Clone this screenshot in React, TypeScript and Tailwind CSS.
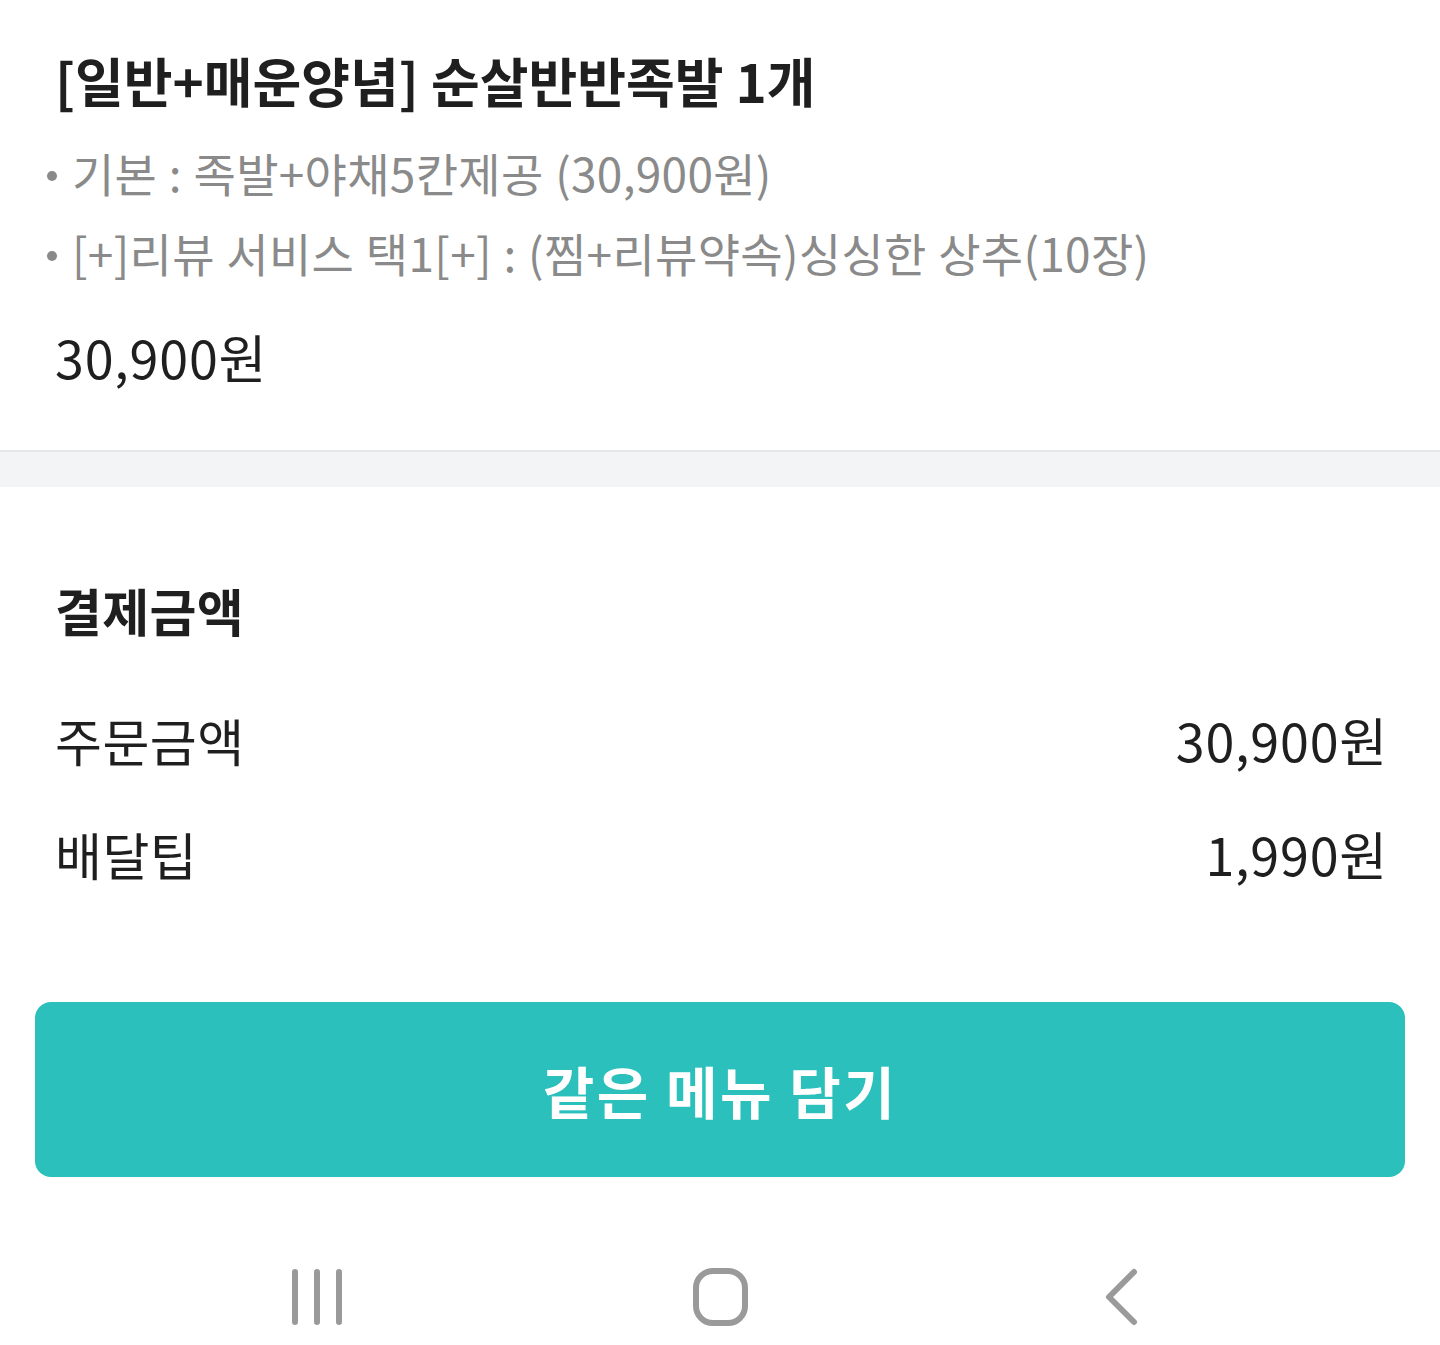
import React from "react";

const font = { fontFamily: '"Noto Sans CJK KR", "Noto Sans", sans-serif' };

function NavBar() {
  return (
    <div className="flex items-center justify-around px-[115px] pt-[90px] pb-[20px]">
      <svg width="60" height="60" viewBox="0 0 60 60" className="text-[#9a9a9a]">
        <g stroke="currentColor" strokeWidth="6" strokeLinecap="round">
          <line x1="8" y1="5" x2="8" y2="55" />
          <line x1="30" y1="5" x2="30" y2="55" />
          <line x1="52" y1="5" x2="52" y2="55" />
        </g>
      </svg>
      <svg width="60" height="60" viewBox="0 0 60 60" className="text-[#9a9a9a]">
        <rect x="6" y="4" width="49" height="52" rx="17" fill="none" stroke="currentColor" strokeWidth="6" />
      </svg>
      <svg width="60" height="60" viewBox="0 0 60 60" className="text-[#9a9a9a]">
        <polyline points="41,5 16,30 41,55" fill="none" stroke="currentColor" strokeWidth="6" strokeLinecap="round" strokeLinejoin="round" />
      </svg>
    </div>
  );
}

export default function App() {
  const options = [
    "기본 : 족발+야채5칸제공 (30,900원)",
    "[+]리뷰 서비스 택1[+] : (찜+리뷰약속)싱싱한 상추(10장)",
  ];
  const rows = [
    { label: "주문금액", value: "30,900원" },
    { label: "배달팁", value: "1,990원" },
  ];

  return (
    <div className="min-h-[1345px] w-[1440px] bg-white text-[#1f1f1f]" style={font}>
      {/* menu item */}
      <section className="px-[55px] pt-[40px] pb-[58px]">
        <h1 className="text-[53px] font-bold leading-[80px] tracking-[0px]">
          [일반+매운양념] 순살반반족발 1개
        </h1>
        <ul className="mt-[12px] -ml-[8px]">
          {options.map((o) => (
            <li
              key={o}
              className="flex items-center text-[46px] leading-[80px] tracking-[0.3px] [word-spacing:1px] text-[#8a8a8a]"
            >
              <span className="mr-[15px] mt-[8px] h-[10px] w-[10px] shrink-0 rounded-full bg-[#8a8a8a]" />
              {o}
            </li>
          ))}
        </ul>
        <div className="mt-[30px] text-[52px] leading-[70px] tracking-[0.8px]">30,900원</div>
      </section>

      <div className="h-[37px] border-t-2 border-[#e6e7ea] bg-[#f3f4f6]" />

      {/* payment */}
      <section className="px-[55px] pt-[88px] pb-[91px]">
        <h2 className="text-[51px] font-bold leading-[70px] tracking-[0.3px]">결제금액</h2>
        <div className="mt-[38px] flex flex-col">
          {rows.map((r) => (
            <div key={r.label} className="flex h-[114px] items-center justify-between">
              <span className="text-[51px] tracking-[0.5px]">{r.label}</span>
              <span className="-mr-[3px] text-[52px] tracking-[0.8px]">{r.value}</span>
            </div>
          ))}
        </div>
      </section>

      <div className="px-[35px]">
        <button className="flex h-[175px] w-full items-center justify-center rounded-[16px] bg-[#2bc0bc] text-[56px] font-bold tracking-[2.5px] text-white">
          같은 메뉴 담기
        </button>
      </div>

      <NavBar />
    </div>
  );
}
